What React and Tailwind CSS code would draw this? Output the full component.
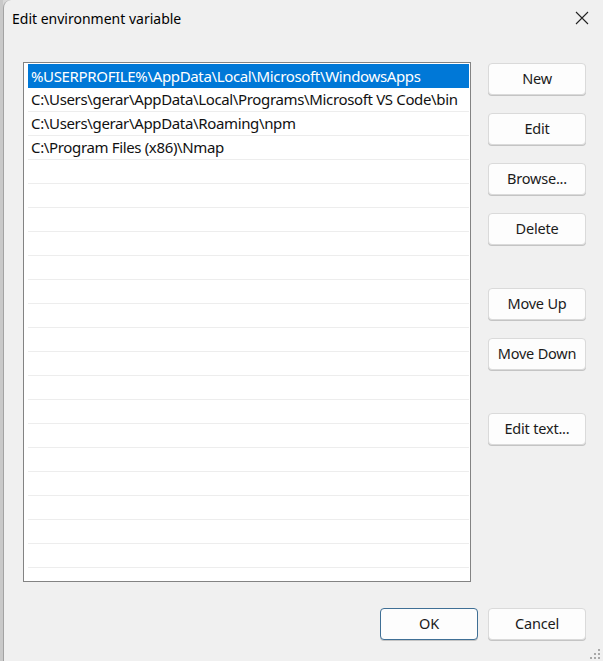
import React from 'react';

const paths = [
  '%USERPROFILE%\\AppData\\Local\\Microsoft\\WindowsApps',
  'C:\\Users\\gerar\\AppData\\Local\\Programs\\Microsoft VS Code\\bin',
  'C:\\Users\\gerar\\AppData\\Roaming\\npm',
  'C:\\Program Files (x86)\\Nmap',
];

function Btn({ children, primary }) {
  return (
    <button
      className={
        'flex h-[32px] w-[98px] items-center justify-center rounded-[4px] bg-[#fdfdfd] text-[14.5px] tracking-[-0.2px] text-[#1b1b1b] shadow-[0_1px_0_#c4c4c4] ' +
        (primary ? 'border border-[#3f6f95]' : 'border border-[#dadada]')
      }
    >
      {children}
    </button>
  );
}

export default function App() {
  const rows = Array.from({ length: 22 }, (_, i) => paths[i] || '');

  return (
    <div className="flex h-[661px] w-[603px] overflow-hidden bg-[#d8d8d8] font-['Noto_Sans',sans-serif]">
      {/* sliver of the window behind */}
      <div className="w-[3px] bg-[#c9c9c9]" />

      <div className="flex flex-1 flex-col rounded-tl-[8px] border-l border-[#a3a3a3] bg-[#f0f0f0]">
        {/* title bar */}
        <div className="flex h-[36px] items-center justify-between pl-[8px] pr-[14px]">
          <span className="text-[14px] text-black">Edit environment variable</span>
          <svg width="14" height="14" viewBox="0 0 14 14" className="text-[#222]">
            <path d="M1 1 L13 13 M13 1 L1 13" stroke="currentColor" strokeWidth="1.1" fill="none" />
          </svg>
        </div>

        {/* list + side buttons */}
        <div className="flex pl-[19px] pt-[26px]">
          <div className="h-[520px] w-[448px] overflow-hidden border border-[#838383] bg-white pl-[4px] pr-[1px] pt-[1px]">
            {rows.map((p, i) => (
              <div
                key={i}
                className={
                  'flex h-[24px] items-center whitespace-nowrap pl-[3px] text-[15px] tracking-[-0.35px] ' +
                  (i === 0
                    ? 'bg-[#0078d7] text-white'
                    : 'border-b border-[#ededed] text-[#111]')
                }
              >
                {p}
              </div>
            ))}
          </div>

          <div className="ml-[17px] mt-[1px] flex flex-col">
            <div className="flex flex-col gap-[18px]">
              <Btn>New</Btn>
              <Btn>Edit</Btn>
              <Btn>Browse...</Btn>
              <Btn>Delete</Btn>
            </div>
            <div className="mt-[43px] flex flex-col gap-[18px]">
              <Btn>Move Up</Btn>
              <Btn>Move Down</Btn>
            </div>
            <div className="mt-[43px]">
              <Btn>Edit text...</Btn>
            </div>
          </div>
        </div>

        {/* OK / Cancel */}
        <div className="mt-[26px] flex justify-end gap-[10px] pr-[17px]">
          <Btn primary>OK</Btn>
          <Btn>Cancel</Btn>
        </div>

        {/* resize grip */}
        <div className="mt-[9px] flex justify-end pr-[3px]">
          <svg width="10" height="10" viewBox="0 0 10 10" fill="#a8a8a8">
            <rect x="8" y="0" width="2" height="2" />
            <rect x="4" y="4" width="2" height="2" />
            <rect x="8" y="4" width="2" height="2" />
            <rect x="0" y="8" width="2" height="2" />
            <rect x="4" y="8" width="2" height="2" />
            <rect x="8" y="8" width="2" height="2" />
          </svg>
        </div>
      </div>
    </div>
  );
}
